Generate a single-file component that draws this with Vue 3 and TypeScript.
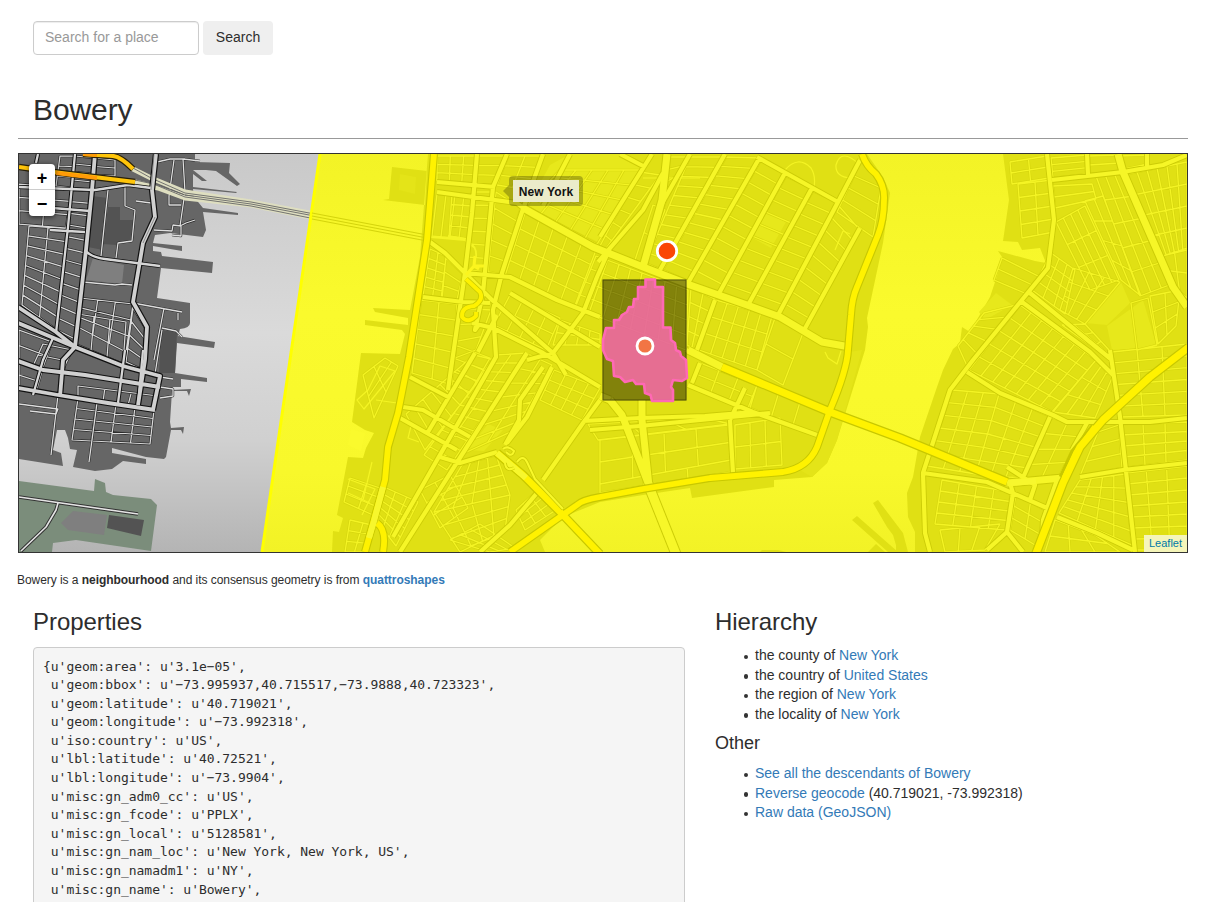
<script setup lang="ts">
// Corners (clockwise from top left) followed by the column and row counts.
type Block = [number, number, number, number, number, number, number, number, number, number]

function streets(blocks: Block[]): string {
  const out: string[] = []
  for (const [ax, ay, bx, by, cx, cy, dx, dy, cols, rows] of blocks) {
    const mix = (p: number, q: number, t: number) => (p + (q - p) * t).toFixed(1)
    for (let i = 0; i <= cols; i++) {
      const t = i / cols
      out.push(`M${mix(ax, bx, t)} ${mix(ay, by, t)}L${mix(dx, cx, t)} ${mix(dy, cy, t)}`)
    }
    for (let j = 0; j <= rows; j++) {
      const t = j / rows
      out.push(`M${mix(ax, dx, t)} ${mix(ay, dy, t)}L${mix(bx, cx, t)} ${mix(by, cy, t)}`)
    }
  }
  return out.join('')
}

const jerseyStreets = streets([
  [19, 184, 72, 188, 66, 228, 19, 224, 2, 3],
  [29, 226, 67, 229, 57, 330, 22, 305, 2, 8],
  [72, 190, 92, 191, 77, 340, 57, 330, 1, 12],
  [60, 156, 75, 156, 72, 188, 56, 186, 1, 3],
  [75, 156, 95, 158, 92, 190, 72, 188, 1, 4],
  [95, 158, 115, 160, 115, 176, 95, 175, 1, 2],
  [80, 298, 133, 304, 126, 352, 76, 326, 3, 3],
  [78, 314, 126, 322, 123, 364, 75, 344, 3, 1],
  [133, 308, 146, 329, 143, 370, 126, 362, 1, 4],
  [78, 386, 158, 396, 153, 409, 78, 398, 3, 1],
  [78, 398, 154, 410, 150, 444, 72, 440, 4, 4],
  [19, 330, 52, 342, 42, 370, 19, 361, 1, 2],
  [43, 344, 72, 350, 62, 372, 33, 366, 1, 2],
  [19, 363, 42, 371, 36, 392, 19, 387, 1, 2]
])

const minorStreets = streets([
  // West side
  [437, 156, 477, 156, 474, 184, 437, 181, 3, 3],
  [479, 156, 505, 156, 493, 185, 475, 184, 1, 3],
  [437, 194, 473, 195, 468, 239, 432, 236, 4, 1],
  [452, 194, 473, 195, 468, 239, 449, 236, 1, 4],
  [475, 192, 493, 192, 487, 272, 467, 270, 1, 6],
  [496, 192, 521, 208, 500, 274, 488, 272, 1, 5],
  [430, 249, 446, 256, 442, 300, 423, 296, 2, 5],
  [446, 258, 463, 274, 457, 300, 441, 299, 1, 3],
  [421, 300, 457, 304, 452, 385, 412, 373, 2, 5],
  [458, 308, 491, 310, 476, 350, 455, 358, 1, 3],
  [455, 345, 490, 358, 470, 392, 450, 384, 1, 3],
  // Village and NoHo
  [525, 213, 596, 250, 574, 308, 505, 276, 5, 4],
  [510, 295, 560, 318, 546, 350, 494, 325, 4, 2],
  [560, 320, 600, 334, 600, 345, 553, 345, 4, 2],
  [560, 170, 640, 170, 600, 246, 526, 206, 5, 5],
  [508, 156, 542, 156, 528, 190, 497, 185, 2, 3],
  [640, 172, 660, 175, 602, 254, 596, 246, 1, 6],
  [596, 256, 688, 290, 686, 350, 575, 308, 8, 4],
  [496, 355, 527, 353, 447, 470, 424, 455, 2, 12],
  [474, 355, 495, 360, 425, 450, 406, 414, 1, 8],
  [528, 354, 552, 365, 515, 430, 460, 455, 2, 7],
  [554, 370, 600, 388, 582, 420, 540, 400, 4, 3],
  // East Village
  [664, 157, 690, 157, 662, 207, 655, 240, 1, 6],
  [690, 157, 724, 157, 662, 270, 645, 263, 1, 11],
  [726, 157, 759, 158, 689, 282, 663, 270, 1, 12],
  [761, 160, 784, 173, 717, 296, 690, 282, 1, 11],
  [786, 176, 811, 188, 747, 306, 718, 296, 1, 10],
  [813, 191, 837, 202, 777, 316, 748, 306, 1, 10],
  [838, 205, 859, 229, 804, 330, 778, 316, 1, 9],
  [854, 176, 881, 188, 873, 237, 837, 212, 1, 3],
  [653, 205, 665, 210, 643, 265, 635, 260, 1, 2],
  // Lower East Side
  [691, 288, 715, 299, 697, 350, 687, 345, 2, 4],
  [716, 300, 772, 316, 757, 370, 699, 350, 5, 3],
  [775, 318, 803, 333, 783, 385, 757, 370, 1, 2],
  [700, 363, 757, 385, 748, 408, 692, 385, 3, 2],
  [757, 385, 800, 402, 793, 425, 750, 408, 2, 1],
  [600, 440, 728, 425, 731, 460, 600, 484, 4, 2],
  [600, 484, 731, 460, 732, 472, 600, 493, 3, 1],
  [735, 425, 780, 418, 782, 465, 735, 469, 3, 2],
  [588, 424, 705, 418, 730, 424, 598, 440, 3, 1],
  // Tribeca and the civic centre
  [363, 375, 385, 358, 398, 366, 374, 418, 2, 2],
  [350, 478, 383, 489, 373, 515, 344, 502, 2, 3],
  [350, 520, 376, 526, 364, 552, 345, 552, 2, 3],
  [384, 487, 418, 502, 396, 546, 376, 520, 3, 5],
  [462, 465, 496, 455, 510, 495, 434, 512, 4, 4],
  [434, 512, 510, 495, 505, 530, 460, 552, 4, 3],
  [420, 490, 450, 475, 468, 508, 440, 528, 2, 3],
  [516, 510, 538, 490, 556, 510, 525, 530, 3, 3],
  [450, 540, 480, 524, 515, 548, 490, 552, 3, 2],
  // Greenpoint and Williamsburg
  [1010, 162, 1047, 156, 1049, 178, 1012, 184, 2, 2],
  [1018, 184, 1052, 180, 1054, 232, 1022, 238, 2, 4],
  [1051, 158, 1087, 155, 1088, 174, 1053, 178, 1, 3],
  [1089, 156, 1118, 155, 1121, 171, 1090, 174, 1, 2],
  [1120, 156, 1147, 155, 1148, 164, 1124, 169, 1, 1],
  [1053, 186, 1092, 184, 1096, 199, 1055, 208, 1, 2],
  [1096, 176, 1124, 174, 1172, 284, 1140, 296, 3, 5],
  [1085, 201, 1103, 196, 1141, 296, 1121, 280, 2, 4],
  [1056, 222, 1085, 206, 1119, 280, 1090, 290, 4, 3],
  [1127, 174, 1187, 162, 1187, 250, 1162, 256, 6, 4],
  [1162, 256, 1187, 248, 1187, 298, 1172, 285, 2, 2],
  [1051, 253, 1075, 270, 1065, 314, 1032, 290, 3, 4],
  [1073, 268, 1120, 282, 1085, 324, 1060, 310, 3, 3],
  [1002, 258, 1042, 278, 1027, 294, 994, 280, 1, 2],
  [984, 313, 1020, 304, 968, 368, 958, 346, 1, 5],
  [1020, 305, 1096, 360, 1052, 412, 969, 370, 7, 5],
  [1096, 360, 1112, 378, 1095, 418, 1053, 412, 3, 3],
  [1085, 324, 1109, 350, 1108, 358, 1062, 325, 3, 2],
  [952, 390, 999, 394, 976, 474, 927, 466, 3, 6],
  [999, 394, 1049, 416, 1021, 478, 976, 474, 3, 6],
  [1051, 418, 1085, 424, 1060, 475, 1024, 480, 2, 4],
  [1112, 352, 1187, 344, 1187, 415, 1121, 417, 3, 6],
  [1121, 424, 1187, 422, 1187, 460, 1124, 468, 3, 4],
  [1126, 473, 1187, 466, 1187, 550, 1135, 550, 3, 7],
  [1098, 432, 1119, 425, 1122, 468, 1080, 476, 1, 3],
  [1080, 480, 1125, 474, 1132, 545, 1059, 513, 4, 5],
  [942, 480, 1011, 492, 1006, 530, 935, 524, 4, 4],
  [1016, 494, 1045, 510, 1040, 548, 1010, 530, 2, 3],
  [940, 530, 1000, 524, 985, 550, 945, 552, 3, 1],
  [1055, 520, 1095, 535, 1120, 552, 1045, 552, 3, 2],
  [1150, 296, 1180, 290, 1176, 326, 1158, 344, 2, 3],
  [1131, 303, 1148, 298, 1157, 345, 1137, 350, 1, 1]
])

const jerseyLanes =
  'M108 190L101 256M125 187V206L135 210L132 241L118 243L116 258M83 282L115 285L122 284L132 285M58 395L51 455M97 403L89 462M19 404L58 409L56 414L30 411M164 308L154 360M162 330L155 374M133 303L182 312M178 313V320M162 328L176 331L182 337M154 230L172 231L173 225L181 226V236L172 235M183 159L185 192L180 226L186 223L195 220M183 159L200 161M157 162L170 159L185 159M174 160L169 196V205H181M136 201L151 203M160 377L173 379M160 387L173 389V396L160 398'
const jerseyRoads =
  'M75 154L68 227L56 333M19 187L95 190L128 185L151 188M85 250Q90 257 105 259L160 266M53 338L43 360L33 395M125 350L118 403M143 350L138 405M50 230L85 232M38 154L36 163M40 207L90 211'
const jerseyAvenues =
  'M95 154L92 190L86 250L75 347L63 360L60 397M156 154L152 190L155 217L143 243L133 302L147 327L145 360L138 405M18 307L56 332L75 347L108 360L123 366L160 376L153 410M18 323L75 347M18 361L43 370L85 375L160 387M18 388L58 395L108 403L155 410'

const highways =
  'M434 154L427 240L409 357L398 413L388 447L385 480L365 552M377 523Q387 530 383 552M862 154Q866 166 876 174Q885 186 884 200Q884 220 878 235L857 287Q852 298 851 315L848 350Q847 370 830 410L817 447Q808 468 783 472L710 478L643 489L600 497Q582 500 577 505L510 552'
const avenues =
  'M437 182L495 187M437 192L517 203L523 208M477 154L472 213L465 273L453 355L448 390M507 154L493 187L483 293L475 330L480 323M543 154L522 212L502 273L493 310L496 357L393 537M430 242L445 253L492 300L553 353L566 375M465 273L510 277L557 300L600 317M423 297L463 302L490 303M472 323L493 328L543 353L600 387M510 293L560 323L600 347M610 248L597 277L583 313L553 353L527 360M475 353L428 432M527 353L463 453L400 552M543 367L520 400L519 420L505 445M552 367L527 417L507 443M410 377L450 398M403 407L423 410L470 437M400 418L457 450M440 457L460 463L497 452M600 400L583 423L543 480M537 493L510 525L480 552M583 421L640 418L705 416L753 412M590 430L640 426L770 413M688 385L753 412L817 435M730 420L733 473M745 388L730 420M652 154L600 237M663 173L643 210L598 262M690 154L660 207M725 154L660 270M760 157L688 283M785 173L717 297M812 188L747 307M860 160L838 202L777 317M860 228L803 332M757 157L838 202M620 154L645 167M715 300L697 350M700 363L692 383M497 315L478 352M570 154L543 206M686 350L722 367M1047 154L1054 220L1048 268L973 360L950 390L923 473L925 533L930 552M1052 180L1123 172L1163 165L1187 155M1087 154L1088 175M1147 154L1147 166M1030 293L1112 360M1022 302L1090 352L1113 375M1110 350L1120 417L1135 552M967 372L1000 393L1053 415L1067 422L1150 422L1187 418M1080 477L1123 470L1187 463M1050 417L1022 480M923 473L987 482L1047 508M1007 467L1035 485L1030 500M1010 483L1013 493L1007 532L1023 552M1007 532L987 550M1057 517L1097 533L1133 550M1087 423L1072 450M1057 480L1043 520L1042 540'
const boulevards =
  'M523 208L593 247L643 267L690 285L747 305L780 317L822 342L850 347M667 154L662 200L643 267M610 400L622 415L648 483M642 400L642 420L649 486M688 350L722 367M1118 154L1123 172L1173 287L1187 307M1007 483L1063 478M610 400L600 396'
const expressways =
  'M722 367L830 412L900 438L1007 482M1189 347L1150 377L1103 420L1080 447L1063 483L1035 556'
const bridgeRamps =
  'M503 449Q508 445 514 451Q512 458 506 452M505 463Q506 472 514 468M517 462Q523 454 527 462L535 479L563 509'

const hierarchy = [
  { type: 'county', name: 'New York' },
  { type: 'country', name: 'United States' },
  { type: 'region', name: 'New York' },
  { type: 'locality', name: 'New York' }
]

const properties = `{u'geom:area': u'3.1e−05',
 u'geom:bbox': u'−73.995937,40.715517,−73.9888,40.723323',
 u'geom:latitude': u'40.719021',
 u'geom:longitude': u'−73.992318',
 u'iso:country': u'US',
 u'lbl:latitude': u'40.72521',
 u'lbl:longitude': u'−73.9904',
 u'misc:gn_adm0_cc': u'US',
 u'misc:gn_fcode': u'PPLX',
 u'misc:gn_local': u'5128581',
 u'misc:gn_nam_loc': u'New York, New York, US',
 u'misc:gn_namadm1': u'NY',
 u'misc:gn_name': u'Bowery',`
</script>

<template>
  <main class="page">
    <form class="search" @submit.prevent>
      <input type="text" placeholder="Search for a place" />
      <button type="submit">Search</button>
    </form>
    <h1>Bowery</h1>

    <section class="map">
      <svg viewBox="19 154 1168 398" width="1168" height="398">
        <defs>
          <linearGradient id="river" x1="0" y1="0" x2="0" y2="1">
            <stop offset="0" stop-color="#c9c9c9" />
            <stop offset=".45" stop-color="#dadada" />
            <stop offset=".72" stop-color="#d0d0d0" />
            <stop offset="1" stop-color="#b4b4b4" />
          </linearGradient>
          <linearGradient id="county" x1="0" y1="0" x2="0" y2="1">
            <stop offset="0" stop-color="#f3f326" />
            <stop offset=".4" stop-color="#fafa2d" />
            <stop offset=".8" stop-color="#f8f82b" />
            <stop offset="1" stop-color="#f2f226" />
          </linearGradient>
        </defs>
        <rect x="19" y="154" width="1168" height="398" fill="url(#river)" />

        <!-- New Jersey -->
        <path fill="#666" d="M19 154H195V162L230 163L229 173L240 184L237 186L216 171L206 170L193 170L207 181L202 181L193 174V187L237 192L236 193L193 189L194 197L203 208L238 213V215L203 212L206 230L203 237L170 233L155 235L153 243L182 246V251L153 246V251L161 252L162 256L213 262L212 273L161 268L157 298L190 303V323Q190 328 180 329L178 336L215 342L214 348L177 343L175 373L207 378V382L181 379V387H173L172 390L191 389L189 396L187 391L172 391L170 422L171 428L184 427L183 434L181 430L171 430L166 457L164 459L146 457L112 448V453L146 459V464L123 461L112 469L95 471L73 467L77 450L70 449L68 438L65 430H57L53 450L61 453L63 466L19 459Z" />
        <path fill="#7b8d7b" d="M19 481L94 491L95 479L105 483L106 492L113 495L151 499L157 505L151 551L76 540L53 543L52 552H19Z" />
        <path fill="#7f7f7f" d="M61 523L73 511L107 515L104 535L68 530ZM93 258L124 265L122 284L86 280Z" />
        <path fill="#535353" d="M109 515L144 520L141 536L107 528ZM92 196L108 198L103 250L88 247ZM108 207H120V220H133L131 240L118 242L117 245L103 244ZM161 330L177 332L175 373H159Z" />
        <g class="lines">
          <path :d="jerseyStreets" stroke="#2b2b2b" stroke-width="2.5" />
          <path :d="jerseyStreets" stroke="#d8d8d8" stroke-width="1.25" />
          <path :d="jerseyLanes" stroke="#292929" stroke-width="2.4" />
          <path :d="jerseyLanes" stroke="#dedede" stroke-width="1.3" />
          <path d="M133 169L151 178L185 192L251 202L325 216M135 182L158 188L185 198L251 205L325 220" stroke="#dedec0" stroke-width="5" />
          <path d="M133 168L151 178L185 193L251 202L325 216M135 180L158 185L185 195L251 204L325 218M134 174L151 183L185 197L251 206L325 221" stroke="#666" stroke-width=".9" />
          <path :d="jerseyRoads" stroke="#111" stroke-width="4.2" />
          <path :d="jerseyAvenues" stroke="#111" stroke-width="6.2" />
          <path :d="jerseyRoads" stroke="#d6d6d6" stroke-width="2.3" />
          <path :d="jerseyAvenues" stroke="#d0d0d0" stroke-width="3.8" />
          <path d="M154 154L151 190M155 217L143 243" stroke="#777" stroke-width=".8" />
          <path d="M19 497L138 514M58 503L56 510L46 527L21 551" stroke="#333" stroke-width="3.6" />
          <path d="M19 497L138 514M58 503L56 510L46 527L21 551" stroke="#e4e4e4" stroke-width="1.6" />
          <path d="M19 167L61 173L135 182M83 154L113 156Q121 157 133 169" stroke="#28200a" stroke-width="6.5" />
          <path d="M19 167L61 173L135 182M83 154L113 156Q121 157 133 169" stroke="#ffc50a" stroke-width="4.2" />
          <path d="M56 173L97 178M83 154L97 155" stroke="#ff9b08" stroke-width="4.2" />
        </g>

        <!-- County overlay -->
        <path fill="url(#county)" d="M320 154L262 552H1187V154Z" />
        <path d="M320 154L262 552" stroke="#ff0" stroke-width="3" />
        <path fill="#e0e014" d="M392 167L427 171L425 205L383 200L389 199ZM428 154L420 257L410 310L373 308L375 312L408 318V325L365 320V325L402 330L405 334L400 354L361 353L352 422L365 430L374 433L366 448L363 458L348 457L337 515L343 518L339 532L333 531L332 552H545L540 540L563 517L600 502L643 495L690 488L692 498L774 487V480L812 477L827 463L837 440L865 350L868 327L867 318L883 243L890 193L883 177L867 154Z" />
        <path fill="#e0e014" d="M1003 154L1009 200L1003 241L1018 242L1022 250L1040 248L1046 263L1035 261L998 251L1002 257L998 273L990 297L970 332L962 327L960 343L953 349L943 370L937 387L920 437L913 477L907 493L908 517L915 532V552H1187V154ZM852 520L857 516L898 552H888ZM873 503L878 500L903 533L908 552H898L893 535L887 527ZM868 552L876 544L885 552ZM890 516L902 533V552H896V535ZM760 552L762 550H778L786 552Z" />
        <path fill="#fafa2d" d="M351 429L365 433L361 451L348 445Z" />
        <path fill="#e7e81b" d="M570 154H620L645 167L600 243L527 207L550 165ZM767 212L786 222L771 248L751 237ZM488 424L503 430L484 451L467 450ZM1120 280L1085 323L1107 325L1130 303ZM1107 326L1143 300L1157 347L1112 350ZM996 293L1012 305L985 320L979 312Z" />
        <path fill="#e4e418" d="M400 174L416 177L415 194L399 190ZM862 350L850 352L830 415L818 448L800 470L812 477L827 463L837 440Z" />
        <g class="lines">
          <path :d="minorStreets" stroke="#d6d60e" stroke-width="2.6" />
          <path :d="minorStreets" stroke="#f4f424" stroke-width="1.3" />
          <path d="M785 170Q798 155 811 168Q816 176 814 187M860 165Q841 147 836 165Q835 177 851 178M835 250L843 231L850 234M368 390L380 366L395 371L364 409L357 400ZM376 400L404 404M411 426L408 438L419 442M348 479L375 489L362 515M348 493L370 503M372 462L363 500M643 178L675 178L700 178M825 352L828 358L837 364L841 351" stroke="#f4f424" stroke-width="1.2" />
          <path d="M312 213L427 235M312 216L427 238M312 219L427 241" stroke="#d4d40c" stroke-width="1.1" />
          <path d="M431 237L465 240L475 248M448 236L465 239M470 243Q477 247 476 257" stroke="#f4f424" stroke-width="1.8" />
          <path :d="avenues" stroke="#cccc07" stroke-width="6" />
          <path :d="boulevards" stroke="#cccc07" stroke-width="9" />
          <path d="M648 484L676 554" stroke="#cccc07" stroke-width="11" />
          <path d="M648 484L676 554" stroke="#f7f729" stroke-width="9" />
          <path :d="avenues" stroke="#f6f627" stroke-width="4.2" />
          <path :d="boulevards" stroke="#f6f627" stroke-width="7" />
          <path :d="highways" stroke="#c8c800" stroke-width="8" />
          <path :d="expressways" stroke="#c8c800" stroke-width="9.5" />
          <path d="M497 453L523 475L563 515L600 554M1095 427L1075 452L1063 478" stroke="#c8c800" stroke-width="9" />
          <path :d="highways" stroke="#fff200" stroke-width="5.8" />
          <path d="M497 453L523 475L563 515L600 554" stroke="#fff200" stroke-width="6.5" />
          <path :d="expressways" stroke="#fff200" stroke-width="7.2" />
          <path d="M1094 426L1075 452L1063 478" stroke="#fff200" stroke-width="3" />
          <path d="M497 453L526 478M383 487L374 521L369 538" stroke="#f7f72d" stroke-width="6" />
          <path d="M1010 483L1036 481" stroke="#f7f72d" stroke-width="6" />
          <path d="M466 279L480 292Q484 300 474 306Q461 307 462 317Q468 324 476 316V312" stroke="#cccc00" stroke-width="5.6" />
          <path d="M466 279L480 292Q484 300 474 306Q461 307 462 317Q468 324 476 316V312" stroke="#fff200" stroke-width="3.8" />
          <path d="M475 256L474 266L479 269M466 275L474 266L484 266" stroke="#fbf51e" stroke-width="3" />
          <path :d="bridgeRamps" stroke="#cccc07" stroke-width="3.6" />
          <path :d="bridgeRamps" stroke="#f8f82a" stroke-width="2" />
        </g>

        <!-- Bounding box, neighbourhood shape and centroids -->
        <rect x="602.5" y="279.5" width="84" height="121" fill="#000" fill-opacity=".42" />
        <rect x="603" y="280" width="83" height="120" fill="none" stroke="#000" stroke-opacity=".4" />
        <path fill="#ff69b4" fill-opacity=".8" stroke="#ff69b4" stroke-width="2.6" stroke-linejoin="round" d="M645.5 279.5H655V287H663V327.5H670.5L671 340L675 343L676 350L680 352L681 356L686 360L687 378L682 381L673 380L671 387L673 390V401H652L650.5 395L645 393L644 384H636L633 380L625 382L620 377L614 376L613 361L607 359L603 350V340L606 328H614V320H619L622 315L627 312L629 307H633L634 299H638V287H645.5Z" />
        <circle cx="667" cy="251" r="9.7" fill="#fa4606" stroke="#fff" stroke-width="2.8" />
        <circle cx="645" cy="346" r="8" fill="#f27544" stroke="#fff" stroke-width="2.8" />
      </svg>
      <div class="zoom"><a>+</a><a>−</a></div>
      <div class="tip">New York</div>
      <div class="credit">Leaflet</div>
    </section>

    <p class="summary">Bowery is a <b>neighbourhood</b> and its consensus geometry is from <a><b>quattroshapes</b></a></p>

    <div class="row">
      <section class="main-col">
        <h2>Properties</h2>
        <pre>{{ properties }}</pre>
      </section>
      <section class="side-col">
        <h2>Hierarchy</h2>
        <ul>
          <li v-for="place in hierarchy" :key="place.type">the {{ place.type }} of <a>{{ place.name }}</a></li>
        </ul>
        <h3>Other</h3>
        <ul>
          <li><a>See all the descendants of Bowery</a></li>
          <li><a>Reverse geocode</a> (40.719021, -73.992318)</li>
          <li><a>Raw data (GeoJSON)</a></li>
        </ul>
      </section>
    </div>
  </main>
</template>

<style>
body {
  overflow: hidden;
}
</style>

<style scoped>
* {
  box-sizing: border-box;
}
.page {
  width: 1188px;
  height: 902px;
  padding: 21px 0 0 18px;
  overflow: hidden;
  background: #fff;
  color: #2d2d2d;
  font: 14px/1.4 "Liberation Sans", Arial, sans-serif;
}
a {
  color: #337ab7;
}
.search {
  display: flex;
  gap: 4px;
  padding-left: 15px;
  height: 34px;
}
.search input {
  width: 166px;
  height: 34px;
  padding: 5px 11px 7px;
  border: 1px solid #ccc;
  border-radius: 4px;
  box-shadow: inset 0 1px 1px rgba(0, 0, 0, 0.075);
  font: inherit;
}
.search input::placeholder {
  color: #999;
  opacity: 1;
}
.search button {
  width: 70px;
  height: 34px;
  padding: 0 0 1px;
  border: 0;
  border-radius: 4px;
  background: #efefef;
  color: #2d2d2d;
  font: inherit;
}
h1,
h2,
h3 {
  margin: 0;
  font-weight: 400;
}
h1 {
  height: 84px;
  padding: 38px 15px 0;
  border-bottom: 1px solid #999;
  font-size: 30px;
  letter-spacing: -0.1px;
  line-height: 33px;
}
.map {
  position: relative;
  width: 1170px;
  height: 400px;
  margin-top: 14px;
  border: 1px solid #333;
  overflow: hidden;
}
.map svg {
  display: block;
}
.lines {
  fill: none;
  stroke-linejoin: round;
}
.zoom {
  position: absolute;
  top: 10px;
  left: 10px;
  width: 26px;
  border-radius: 4px;
  background: #fff;
  box-shadow: 0 1px 5px rgba(0, 0, 0, 0.65);
}
.zoom a {
  display: block;
  height: 26px;
  color: #000;
  font-size: 18px;
  font-weight: 700;
  line-height: 28px;
  text-align: center;
}
.zoom a:first-child {
  border-bottom: 1px solid #ccc;
}
.tip {
  position: absolute;
  top: 22px;
  left: 490px;
  width: 74px;
  height: 30px;
  border: 4px solid rgba(0, 0, 0, 0.25);
  border-radius: 4px;
  background: #ebebca;
  background-clip: padding-box;
  color: #111;
  font-size: 12px;
  font-weight: 700;
  letter-spacing: 0.1px;
  line-height: 24px;
  text-align: center;
}
.tip::before {
  content: "";
  position: absolute;
  top: 5px;
  left: -10px;
  border: solid transparent;
  border-width: 6px 6px 6px 0;
  border-right-color: rgba(0, 0, 0, 0.25);
}
.credit {
  position: absolute;
  right: 0;
  bottom: 0;
  width: 43px;
  height: 17px;
  background: #f5f5b9;
  color: #0078a8;
  font-size: 11px;
  line-height: 17px;
  text-align: center;
}
.summary {
  margin: 19px 0 0 -1px;
  font-size: 12px;
  letter-spacing: -0.05px;
  line-height: 17px;
}
.row {
  display: flex;
  margin-top: 19px;
}
.main-col {
  width: 682px;
  padding: 0 15px;
}
.side-col {
  flex: 1;
  padding: 0 15px;
}
h2 {
  font-size: 24px;
  letter-spacing: -0.05px;
  line-height: 27px;
}
pre {
  height: 300px;
  margin: 12px 0 0;
  padding: 9.5px 9px;
  border: 1px solid #ccc;
  border-radius: 4px;
  background: #f5f5f5;
  font: 13px/18.6px "DejaVu Sans Mono", monospace;
  letter-spacing: -0.03px;
}
ul {
  margin: 11px 0 10px;
  padding-left: 40px;
  line-height: 19.55px;
  list-style: none;
}
li {
  position: relative;
}
li::before {
  content: "";
  position: absolute;
  top: 8.5px;
  left: -11.5px;
  width: 4.5px;
  height: 4.5px;
  border-radius: 50%;
  background: #333;
}
h3 {
  font-size: 18px;
  line-height: 19px;
}
</style>
